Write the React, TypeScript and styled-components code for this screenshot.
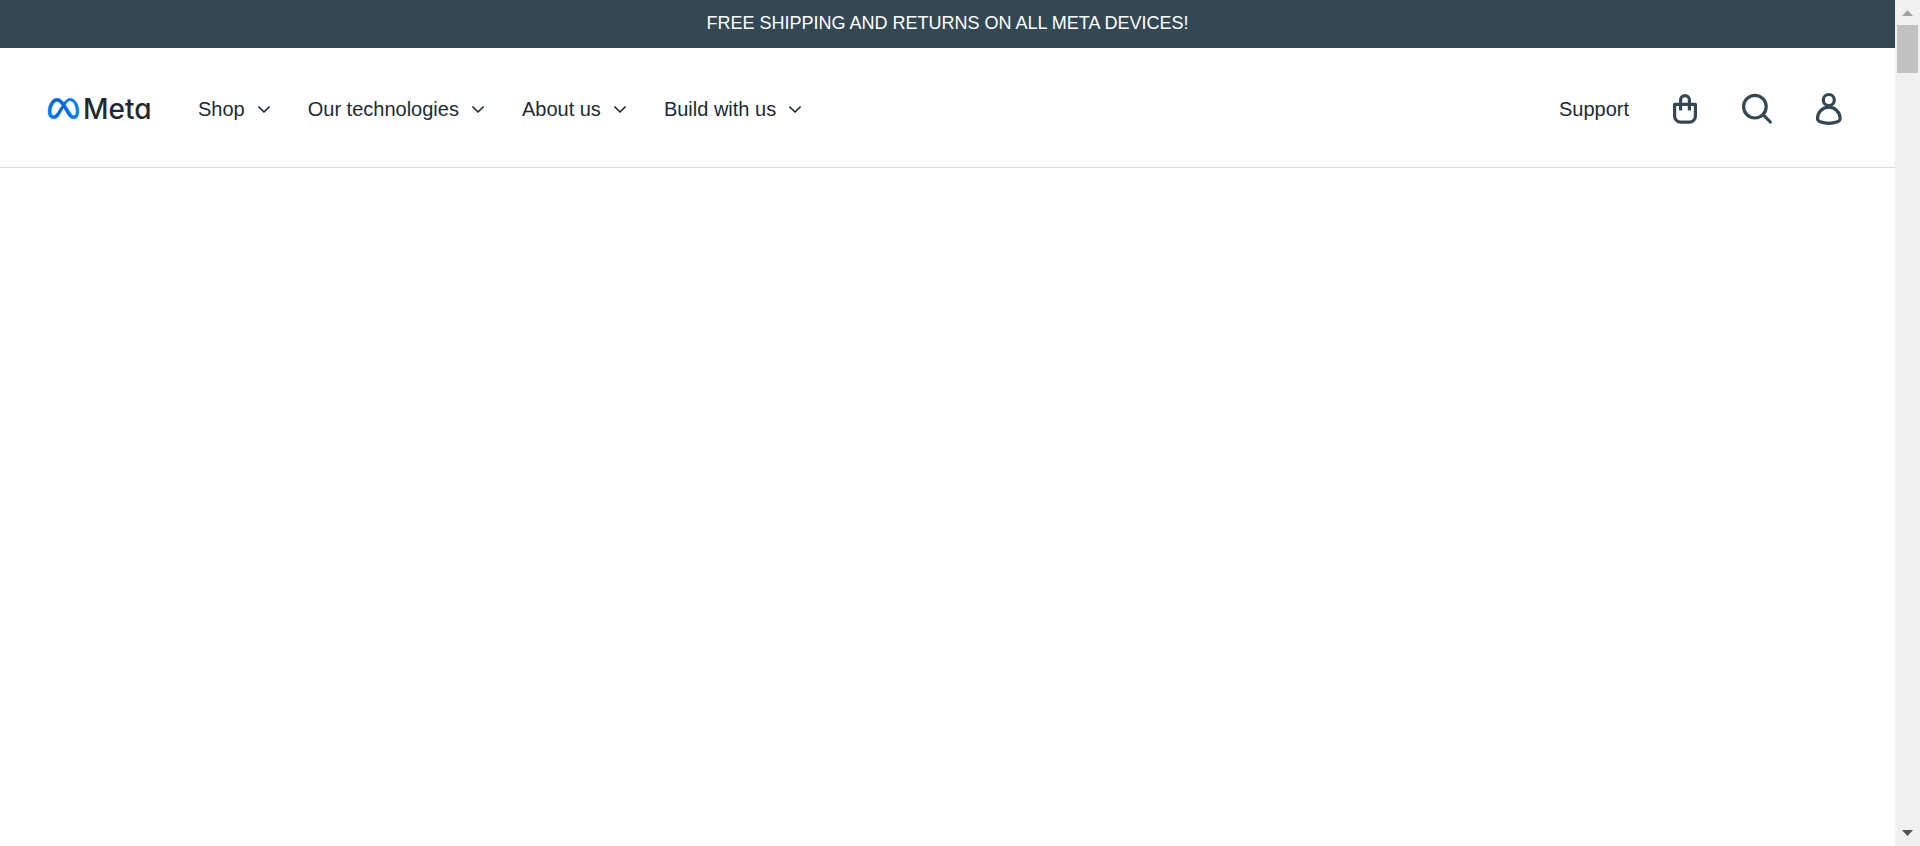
import React from 'react';
import styled, { createGlobalStyle } from 'styled-components';
import { SiMeta } from 'react-icons/si';

const GlobalStyle = createGlobalStyle`
  *, *::before, *::after { box-sizing: border-box; }
  body {
    margin: 0;
    background: #fff;
    color: #1c2b33;
    font-family: "Liberation Sans", Arial, sans-serif;
  }
`;

const Shell = styled.div`
  display: flex;
  height: 100vh;
`;

const Page = styled.div`
  flex: 1;
  min-width: 0;
`;

const Banner = styled.p`
  margin: 0;
  padding: 11px 16px 13px;
  background: #344854;
  color: #fff;
  font-size: 18px;
  line-height: 24px;
  text-align: center;
`;

const Header = styled.header`
  display: flex;
  align-items: center;
  min-height: 120px;
  padding: 2px 50px 0 48px;
  border-bottom: 1px solid #dadce4;
`;

const Logo = styled.a`
  display: flex;
  align-items: center;
  gap: 4px;
  width: 104px;
  margin-right: 46px;
  color: #1c2b33;
  text-decoration: none;
`;

const LogoMark = styled(SiMeta)`
  flex: none;
  width: 31px;
  height: 31px;
  overflow: visible;
  fill: url(#meta-blue);
  stroke: url(#meta-blue);
  stroke-width: 0.3px;
`;

const Gradients = styled.svg`
  position: absolute;
  width: 0;
  height: 0;
`;

const Wordmark = styled.span`
  padding-top: 1px;
  font-family: Inter, sans-serif;
  font-feature-settings: "cv11";
  font-size: 28px;
  font-weight: 500;
  line-height: 32px;
`;

const MenuBar = styled.nav`
  display: flex;
  gap: 36px;
`;

const MenuButton = styled.button`
  display: flex;
  align-items: center;
  gap: 11px;
  padding: 0;
  border: 0;
  background: none;
  color: inherit;
  font: inherit;
  font-size: 20px;
  line-height: 24px;
  white-space: nowrap;
  cursor: pointer;
`;

const Actions = styled.div`
  display: flex;
  align-items: center;
  gap: 40px;
  margin-left: auto;
`;

const SupportLink = styled.a`
  color: inherit;
  font-size: 20px;
  line-height: 24px;
  text-decoration: none;
`;

const IconButton = styled.button`
  display: flex;
  padding: 0;
  border: 0;
  background: none;
  color: #344854;
  cursor: pointer;
`;

const ScrollTrack = styled.div`
  display: flex;
  flex-direction: column;
  align-items: center;
  width: 25px;
  background: #f0f0f0;
`;

const ScrollArrow = styled.svg<{ $tone: string }>`
  display: block;
  width: 25px;
  height: 25px;
  fill: ${(p) => p.$tone};
`;

const ScrollThumb = styled.div`
  width: 21px;
  height: 48px;
  margin-bottom: auto;
  background: #c1c1c1;
`;

const Chevron = () => (
  <svg width="16" height="16" viewBox="0 0 16 16" fill="none" stroke="currentColor" strokeWidth="1.7" strokeLinecap="round" strokeLinejoin="round" aria-hidden="true">
    <path d="M2.900 6 8 11 13.100 6" />
  </svg>
);

const iconProps = {
  width: 32,
  height: 32,
  viewBox: '0 0 32 32',
  fill: 'none',
  stroke: 'currentColor',
  strokeWidth: 3.2,
  overflow: 'visible',
  'aria-hidden': true,
};

const BagIcon = () => (
  <svg {...iconProps}>
    <path d="M5.600 11.300h20.800v11.900a6 6 0 0 1-6 6h-8.800a6 6 0 0 1-6-6z" strokeLinejoin="round" />
    <path d="M11.600 17.500V7a4.400 4.400 0 0 1 8.800 0V17.500" />
  </svg>
);

const SearchIcon = () => (
  <svg {...iconProps} strokeLinecap="round">
    <circle cx="13.900" cy="13.700" r="11.300" />
    <path d="M22.300 21.900 29.300 29" />
  </svg>
);

const UserIcon = () => (
  <svg {...iconProps}>
    <circle cx="15.800" cy="7" r="5.500" />
    <path d="M15.800 14.200c-6.500 0-11.300 5.400-11.300 11.500 0 2.900 5.500 4.600 11.300 4.600s11.300-1.700 11.300-4.600c0-6.100-4.800-11.500-11.300-11.500z" />
  </svg>
);

const menus = ['Shop', 'Our technologies', 'About us', 'Build with us'];

export default function App() {
  return (
    <>
      <GlobalStyle />
      <Gradients aria-hidden="true">
        <linearGradient id="meta-blue" x1="0" y1="0.7" x2="1" y2="0.5">
          <stop offset="0" stopColor="#0082fb" />
          <stop offset="0.3" stopColor="#0064e0" />
          <stop offset="0.5" stopColor="#0064e0" />
          <stop offset="0.75" stopColor="#0078f4" />
          <stop offset="1" stopColor="#0082fb" />
        </linearGradient>
      </Gradients>
      <Shell>
        <Page>
          <Banner>FREE SHIPPING AND RETURNS ON ALL META DEVICES!</Banner>
          <Header>
            <Logo href="#">
              <LogoMark aria-hidden="true" />
              <Wordmark>Meta</Wordmark>
            </Logo>
            <MenuBar aria-label="Main">
              {menus.map((label) => (
                <MenuButton key={label} type="button" aria-haspopup="true">
                  {label}
                  <Chevron />
                </MenuButton>
              ))}
            </MenuBar>
            <Actions>
              <SupportLink href="#">Support</SupportLink>
              <IconButton type="button" aria-label="Shopping bag"><BagIcon /></IconButton>
              <IconButton type="button" aria-label="Search"><SearchIcon /></IconButton>
              <IconButton type="button" aria-label="Account"><UserIcon /></IconButton>
            </Actions>
          </Header>
        </Page>
        <ScrollTrack aria-hidden="true">
          <ScrollArrow $tone="#a3a3a3" viewBox="0 0 25 25"><path d="M7 16 12.500 10 18 16z" /></ScrollArrow>
          <ScrollThumb />
          <ScrollArrow $tone="#505050" viewBox="0 0 25 25"><path d="M7 9h11L12.500 15z" /></ScrollArrow>
        </ScrollTrack>
      </Shell>
    </>
  );
}
